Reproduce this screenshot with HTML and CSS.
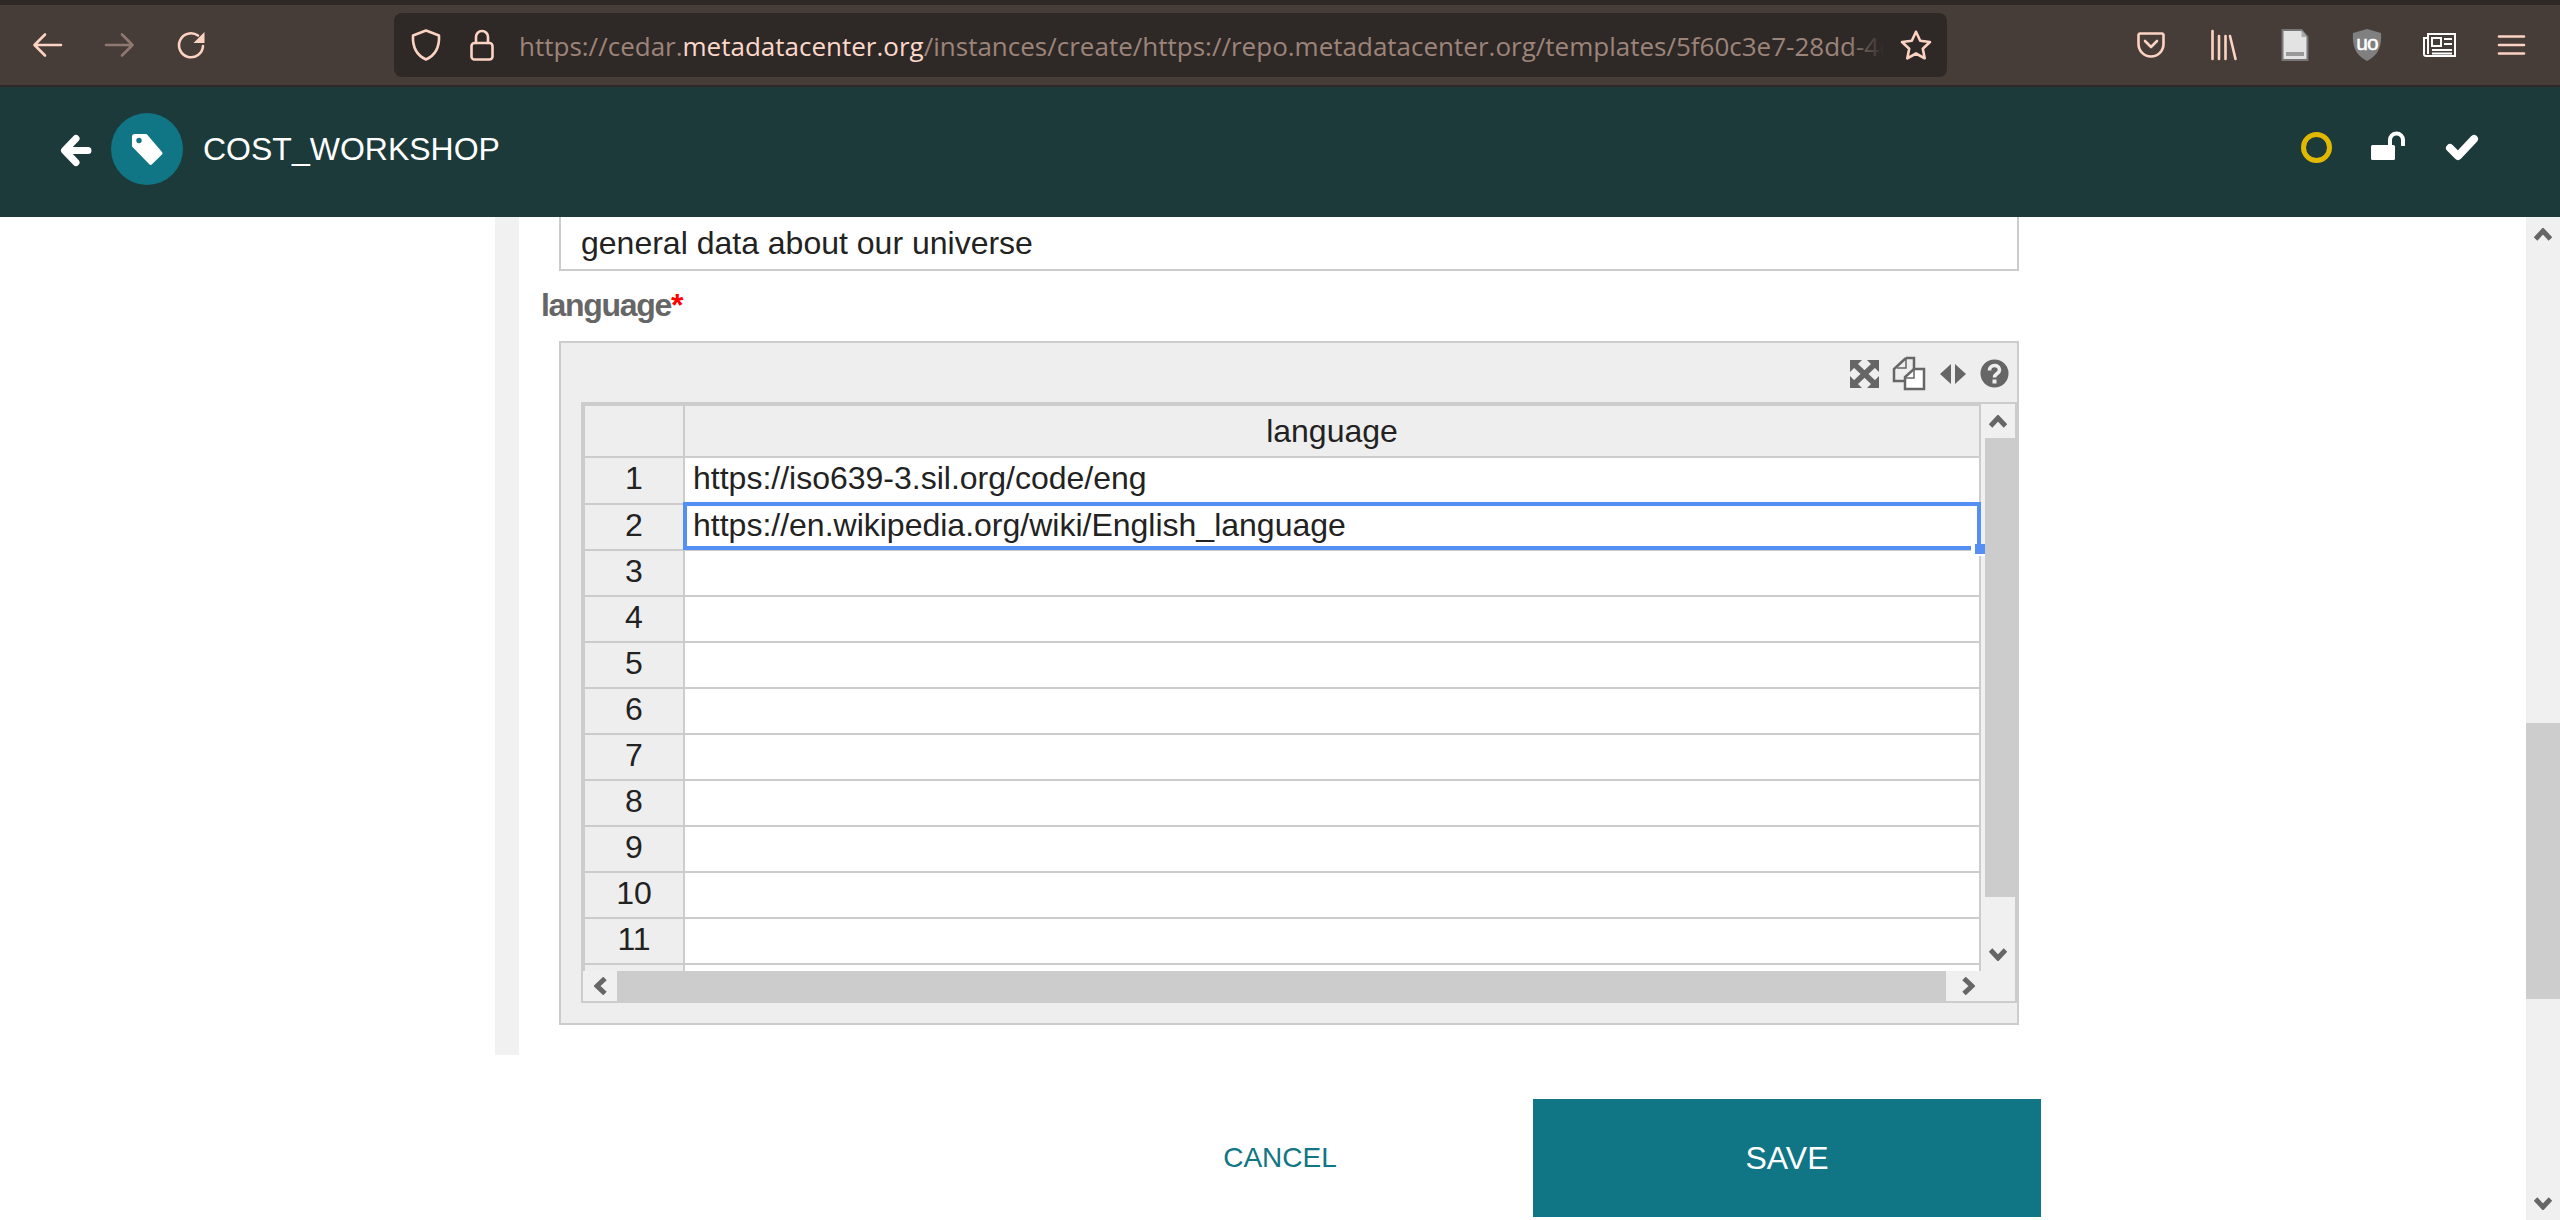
FILE: index.html
```html
<!DOCTYPE html>
<html lang="en">
<head>
<meta charset="utf-8">
<title>COST_WORKSHOP</title>
<link rel="stylesheet" href="styles.css">
</head>
<body>
<div class="chrome">
  <svg class="ic w29 nav-gap" viewBox="0 0 29 24"><path d="M28 12H2M12 1.500L1.500 12 12 22.500" class="pe"/></svg>
  <svg class="ic w29 dim nav-gap" viewBox="0 0 29 24"><path d="M1 12h26M17 1.500L27.500 12 17 22.500" class="pe"/></svg>
  <svg class="ic w28" viewBox="0 0 28 28"><path d="M26 15a12 12 0 1 1-5-10.500" class="pe"/><path d="M27.500 1v11h-11z" class="pf"/></svg>
  <div class="urlbar">
    <svg class="ic w30" viewBox="0 0 30 32"><path d="M15 1.500L28 6.500c.5 10-2 19-13 24C4 25.500 1.500 16.500 2 6.500z" class="pe"/></svg>
    <svg class="ic w24 lock" viewBox="0 0 24 32"><rect x="1.500" y="14" width="21" height="16.500" rx="3" class="pe"/><path d="M6 14V8a6 6 0 0 1 12 0v6" class="pe"/></svg>
    <div class="url">https://cedar.<b>metadatacenter.org</b>/instances/create/https://repo.metadatacenter.org/templates/5f60c3e7-28dd-4c</div>
    <svg class="ic w32" viewBox="0 0 32 30"><path d="M16 1.800l4.200 9 9.800 1.200-7.200 6.700 1.900 9.600-8.700-4.800-8.700 4.800 1.900-9.600L2 12l9.800-1.200z" class="pe"/></svg>
  </div>
  <svg class="ic w28 pocket" viewBox="0 0 28 26"><path d="M3 1.500h22a1.500 1.500 0 0 1 1.500 1.500v9a12.500 12.500 0 0 1-25 0V3A1.500 1.500 0 0 1 3 1.500z" class="pe"/><path d="M8 9l6 6 6-6" class="pe"/></svg>
  <svg class="ic w26 lib" viewBox="0 0 26 28"><path d="M1.500 0v28M8 5v23M14.500 5v23M19 5l5.500 23" class="pe"/></svg>
  <svg class="ic w28 doc" viewBox="0 0 28 32"><path d="M1.500 1h19l6 7v23h-25z" fill="#e3e3e3" stroke="#777" stroke-width="2"/><path d="M20.500 1v7h6z" fill="#aaa"/><rect x="5" y="23" width="18" height="4" fill="#999"/></svg>
  <svg class="ic w30 ub" viewBox="0 0 30 32"><path d="M15 0l14 4c1 12-2 22-14 28C3 26 0 16 1 4z" fill="#808080"/><text x="15" y="21" class="ub-t">uo</text></svg>
  <svg class="ic w33 news" viewBox="0 0 33 24"><path d="M5 1h27v22H3a2 2 0 0 1-2-2V5h4z" fill="none" stroke="#fff" stroke-width="2"/><path d="M5 5v16" stroke="#fff" stroke-width="2"/><rect x="9" y="5" width="9" height="8" fill="none" stroke="#fff" stroke-width="2"/><path d="M21 6h8M21 11h8M9 17h20M9 20.500h20" stroke="#fff" stroke-width="2"/></svg>
  <svg class="ic w25 burger" viewBox="0 0 25 20"><path d="M0 1.500h25M0 10h25M0 18.500h25" class="pe"/></svg>
</div>

<header class="app-head">
  <svg class="ic w30 head-back" viewBox="0 0 30 31"><path d="M27 15.500H7M15 3.500L3.500 15.500 15 27.500" class="wh"/></svg>
  <div class="badge">
    <svg class="ic w31" viewBox="0 0 31 31"><path d="M2.500 0h11c1 0 1.500.3 2 1l14.500 17c.7.800.7 1.800 0 2.500L20 30.200c-.8.900-2 .9-2.700 0L1 13.500c-.7-.7-1-1.300-1-2.300V2.500C0 1 1 0 2.500 0z" fill="#fff"/><circle cx="7" cy="6.500" r="2.700" fill="#107685"/></svg>
  </div>
  <h1 class="title">COST_WORKSHOP</h1>
  <div class="head-right">
    <span class="ring"></span>
    <svg class="ic w34 unlock" viewBox="0 0 34 29"><rect x="0" y="14" width="24" height="15" rx="1.500" fill="#fff"/><path d="M19 14V9a6.500 6.500 0 0 1 13 0v6" fill="none" stroke="#fff" stroke-width="4"/></svg>
    <svg class="ic w32" viewBox="0 0 32 25"><path d="M4 13l8 8L28 4" fill="none" stroke="#fff" stroke-width="8" stroke-linecap="round" stroke-linejoin="round"/></svg>
  </div>
</header>

<div class="page">
  <main class="content">
    <section class="form">
      <div class="textbox">general data about our universe</div>
      <label class="field-label">language<span class="req">*</span></label>
      <div class="panel">
        <div class="tools">
          <svg class="ic w29" viewBox="0 0 29 28"><path d="M0 0h12L0 12zM29 0v12L17 0zM0 28V16l12 12zM29 28H17l12-12z" fill="#666"/><path d="M4 4l21 20M25 4L4 24" stroke="#666" stroke-width="5.500" fill="none"/></svg>
          <svg class="ic w33" viewBox="0 0 33 33"><path d="M13 1h8v11M13 1L1 12v12h10" fill="none" stroke="#666" stroke-width="2.500"/><path d="M13 2v9H4" fill="none" stroke="#666" stroke-width="1.500"/><path d="M21 12h10v20H12V20z" fill="#fff" stroke="#666" stroke-width="2.500"/><path d="M21 12v9h-9" fill="none" stroke="#666" stroke-width="1.500"/></svg>
          <svg class="ic w26" viewBox="0 0 26 20"><path d="M11 0v20L0 10zM15 0v20l11-10z" fill="#666"/></svg>
          <svg class="ic w29" viewBox="0 0 29 29"><circle cx="14.500" cy="14.500" r="14" fill="#666"/><path d="M9.500 11.500c0-6.500 10-6.500 10-.5 0 3.500-5 3.500-5 7.500" fill="none" stroke="#eee" stroke-width="3.600"/><rect x="12.500" y="20.500" width="4" height="4" fill="#eee"/></svg>
        </div>
        <div class="frame">
          <div class="grid-row">
            <div class="cells">
              <div class="cells-clip">
                <table class="sheet">
                  <thead><tr><th class="corner"></th><th>language</th></tr></thead>
                  <tbody>
                    <tr><th>1</th><td>https://iso639-3.sil.org/code/eng</td></tr>
                    <tr><th>2</th><td>https://en.wikipedia.org/wiki/English_language</td></tr>
                    <tr><th>3</th><td></td></tr>
                    <tr><th>4</th><td></td></tr>
                    <tr><th>5</th><td></td></tr>
                    <tr><th>6</th><td></td></tr>
                    <tr><th>7</th><td></td></tr>
                    <tr><th>8</th><td></td></tr>
                    <tr><th>9</th><td></td></tr>
                    <tr><th>10</th><td></td></tr>
                    <tr><th>11</th><td></td></tr>
                    <tr><th></th><td></td></tr>
                  </tbody>
                </table>
              </div>
              <div class="selection"></div>
              <div class="handle"></div>
            </div>
            <div class="vbar">
              <div class="sb-btn"><svg class="ar" viewBox="0 0 18 13"><path d="M1.500 11L9 3l7.500 8" class="chev"/></svg></div>
              <div class="vthumb"></div>
              <div class="vrest"><svg class="ar" viewBox="0 0 18 13"><path d="M1.500 2L9 10l7.500-8" class="chev"/></svg></div>
            </div>
          </div>
          <div class="hbar">
            <div class="sb-btn h"><svg class="ar-h" viewBox="0 0 13 18"><path d="M11 1.500L3 9l8 7.500" class="chev"/></svg></div>
            <div class="hthumb"></div>
            <div class="hrest"><svg class="ar-h" viewBox="0 0 13 18"><path d="M2 1.500L10 9l-8 7.500" class="chev"/></svg></div>
          </div>
        </div>
      </div>
    </section>
    <div class="actions">
      <button class="cancel">CANCEL</button>
      <button class="save">SAVE</button>
    </div>
  </main>
  <aside class="page-bar">
    <div class="pb-btn"><svg class="ar" viewBox="0 0 18 13"><path d="M1.500 11L9 3l7.500 8" class="chev"/></svg></div>
    <div class="pb-track1"></div>
    <div class="pb-thumb"></div>
    <div class="pb-track2"></div>
    <div class="pb-btn"><svg class="ar" viewBox="0 0 18 13"><path d="M1.500 2L9 10l7.500-8" class="chev"/></svg></div>
  </aside>
</div>
</body>
</html>
```
FILE: styles.css
```css
* { box-sizing: border-box; }
html, body { margin: 0; padding: 0; }
body {
  width: 2560px;
  height: 1220px;
  overflow: hidden;
  display: flex;
  flex-direction: column;
  background: #fff;
  font-family: "Liberation Sans", Arial, sans-serif;
  color: #222;
}

.ic { display: block; flex: none; overflow: visible; }
.w24 { width: 24px; } .w25 { width: 25px; } .w26 { width: 26px; } .w28 { width: 28px; }
.w29 { width: 29px; } .w30 { width: 30px; } .w31 { width: 31px; } .w32 { width: 32px; }
.w33 { width: 33px; } .w34 { width: 34px; }

.pe { fill: none; stroke: #fcd3c3; stroke-width: 2.6; stroke-linecap: round; stroke-linejoin: round; }
.pf { fill: #fcd3c3; }
.wh { fill: none; stroke: #fff; stroke-width: 7; stroke-linecap: round; stroke-linejoin: round; }

/* browser toolbar */
.chrome {
  height: 87px;
  flex: none;
  display: flex;
  align-items: center;
  padding: 0 0 0 33px;
  background: #473d38;
  border-top: 5px solid #2e2926;
  border-bottom: 2px solid #2e2926;
}
.nav-gap { margin-right: 43px; }
.dim { opacity: .4; }
.urlbar {
  margin-left: 189px;
  width: 1553px;
  height: 64px;
  flex: none;
  display: flex;
  align-items: center;
  padding: 0 15px 0 17px;
  background: #2e2926;
  border-radius: 8px;
}
.lock { margin-left: 29px; }
.url {
  position: relative;
  flex: 1;
  min-width: 0;
  margin: 2px 16px 0 25px;
  overflow: hidden;
  white-space: nowrap;
  font-family: "Open Sans", "Noto Sans", sans-serif;
  font-size: 26px;
  color: #9c847a;
}
.url b { font-weight: 400; color: #fcd8ca; }
.url::after {
  content: "";
  position: absolute;
  top: 0; right: 0; bottom: 0;
  width: 36px;
  background: linear-gradient(to right, rgba(46,41,38,0), #2e2926);
}
.pocket { margin-left: 190px; }
.lib { margin-left: 46px; }
.doc { margin-left: 44px; }
.ub { margin-left: 43px; }
.ub-t { font: 400 21px "Liberation Sans", sans-serif; letter-spacing: -1px; fill: #fff; stroke: #fff; stroke-width: .5px; text-anchor: middle; }
.news { margin-left: 41px; }
.burger { margin-left: 43px; }

/* app header */
.app-head {
  height: 130px;
  flex: none;
  display: flex;
  align-items: center;
  padding: 0 82px 6px 61px;
  background: #1c3a3a;
  color: #fff;
}
.head-back { margin-top: 3px; }
.badge {
  width: 72px;
  height: 72px;
  margin-left: 20px;
  border-radius: 50%;
  background: #107685;
  display: flex;
  align-items: center;
  justify-content: center;
}
.title {
  margin: 0 0 0 20px;
  font-size: 32px;
  font-weight: 400;
  color: #fff;
}
.head-right {
  margin-left: auto;
  padding-bottom: 3px;
  display: flex;
  align-items: center;
  gap: 41px;
}
.unlock { margin-bottom: 4px; }
.ring {
  display: block;
  width: 31px;
  height: 31px;
  margin-right: -2px;
  border: 5px solid #e0b900;
  border-radius: 50%;
}

/* page */
.page { flex: 1; min-height: 0; display: flex; }
.content { flex: 1; min-width: 0; display: flex; flex-direction: column; }
.form {
  margin-left: 495px;
  width: 1524px;
  padding: 0 0 30px 0;
  border-left: 24px solid #f1f1f1;
}
.textbox {
  margin-left: 40px;
  width: 1460px;
  height: 54px;
  padding: 0 0 0 20px;
  border: 2px solid #ccc;
  border-top: 0;
  font-size: 32px;
  line-height: 52px;
  color: #222;
}
.field-label {
  display: block;
  height: 70px;
  padding: 14px 0 0 22px;
  font-size: 32px;
  line-height: 40px;
  font-weight: 700;
  letter-spacing: -1.3px;
  color: #666;
}
.req { color: #f00; }

.panel {
  margin-left: 40px;
  width: 1460px;
  height: 684px;
  border: 2px solid #ccc;
  background: #eee;
}
.tools {
  height: 59px;
  display: flex;
  align-items: center;
  justify-content: flex-end;
  gap: 14px;
  padding: 2px 8px 0 0;
}
.frame {
  margin-left: 20px;
  height: 601px;
  border: 2px solid #ccc;
  display: flex;
  flex-direction: column;
}
.grid-row { height: 567px; display: flex; flex: none; }
.cells {
  position: relative;
  width: 1398px;
  height: 567px;
  flex: none;
  border: 2px solid #ccc;
  border-bottom: 0;
}
.cells-clip { width: 100%; height: 100%; overflow: hidden; }
.sheet {
  width: 100%;
  border-collapse: separate;
  border-spacing: 0;
  table-layout: fixed;
  background: #fff;
  font-size: 32px;
}
.sheet th, .sheet td {
  height: 46px;
  padding: 0 0 4px 0;
  font-weight: 400;
  border-bottom: 2px solid #ccc;
  color: #222;
}
.sheet th { background: #eee; text-align: center; }
.sheet thead th { height: 52px; padding: 0; }
.sheet th:first-child { width: 100px; border-right: 2px solid #ccc; }
.sheet td { padding-left: 8px; background: #fff; white-space: nowrap; }
.sheet tbody tr:first-child th, .sheet tbody tr:first-child td { height: 47px; padding-bottom: 5px; }
.selection {
  position: absolute;
  left: 98px;
  top: 96px;
  width: 1298px;
  height: 48px;
  border: 4px solid #5490f4;
}
.handle {
  position: absolute;
  left: 1390px;
  top: 138px;
  width: 10px;
  height: 10px;
  background: #5490f4;
  box-shadow: -4px 0 0 #fff, 0 2px 0 #fff, -4px 2px 0 #fff;
  z-index: 2;
}
.vbar {
  width: 34px;
  flex: none;
  display: flex;
  flex-direction: column;
  background: #f0f0f0;
}
.sb-btn {
  width: 34px;
  height: 34px;
  flex: none;
  display: flex;
  align-items: center;
  justify-content: center;
  background: #f0f0f0;
}
.vthumb { height: 459px; margin-left: 4px; background: #ccc; flex: none; }
.vrest {
  flex: 1;
  display: flex;
  align-items: flex-end;
  justify-content: center;
  padding: 0 0 10px 0;
}
.ar { display: block; width: 18px; height: 13px; }
.ar-h { display: block; width: 13px; height: 18px; }
.chev { fill: none; stroke: #666; stroke-width: 5; }
.hbar { height: 30px; display: flex; flex: none; }
.sb-btn.h { height: 30px; }
.hthumb { width: 1329px; flex: none; background: #ccc; margin-bottom: -2px; }
.hrest {
  flex: 1;
  display: flex;
  align-items: center;
  padding-left: 16px;
  background: #f0f0f0;
}

.actions {
  margin: 44px 0 0 0;
  padding-left: 1533px;
  position: relative;
  display: flex;
  align-items: center;
}
.cancel, .save {
  border: 0;
  background: none;
  font-family: "Liberation Sans", Arial, sans-serif;
  padding: 0;
}
.cancel {
  width: 300px;
  margin-left: -403px;
  margin-right: 103px;
  font-size: 28px;
  color: #107685;
}
.save {
  width: 508px;
  height: 118px;
  background: #107685;
  color: #fff;
  font-size: 32px;
}

.page-bar {
  width: 34px;
  flex: none;
  display: flex;
  flex-direction: column;
  background: #f0f0f0;
}
.pb-btn { height: 34px; flex: none; display: flex; align-items: center; justify-content: center; }
.pb-track1 { height: 472px; flex: none; }
.pb-thumb { height: 276px; flex: none; background: #cdcdcd; }
.pb-track2 { flex: 1; }
```
